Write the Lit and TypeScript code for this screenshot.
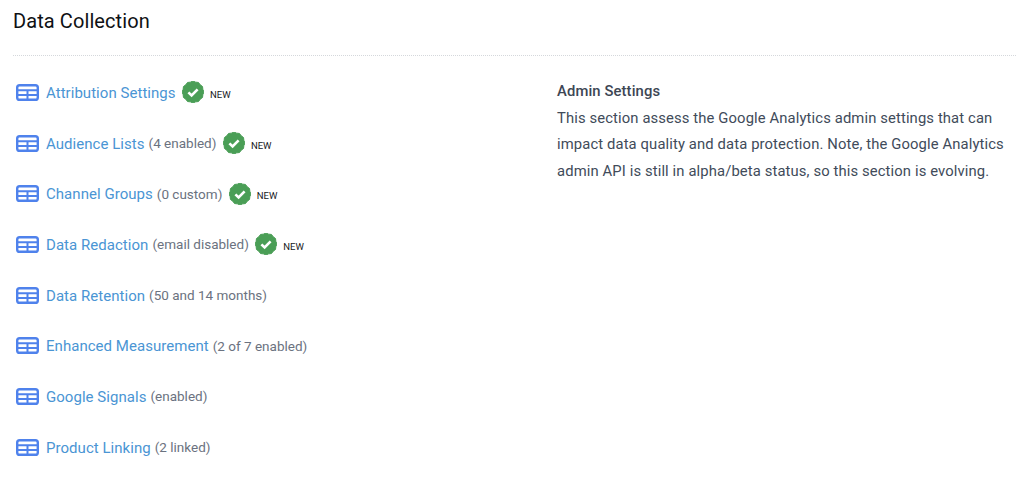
import { LitElement, html, css, svg } from "lit";
import { customElement } from "lit/decorators.js";

const items: [string, string, boolean][] = [
  ["Attribution Settings", "", true],
  ["Audience Lists", "(4 enabled)", true],
  ["Channel Groups", "(0 custom)", true],
  ["Data Redaction", "(email disabled)", true],
  ["Data Retention", "(50 and 14 months)", false],
  ["Enhanced Measurement", "(2 of 7 enabled)", false],
  ["Google Signals", "(enabled)", false],
  ["Product Linking", "(2 linked)", false],
];

function sealPath(): string {
  const pts: string[] = [];
  const n = 12;
  for (let i = 0; i < n * 2; i++) {
    const r = i % 2 ? 10.2 : 11;
    const a = (Math.PI * i) / n;
    pts.push(`${(11 + r * Math.sin(a)).toFixed(2)} ${(11 - r * Math.cos(a)).toFixed(2)}`);
  }
  return "M" + pts.join("L") + "Z";
}
const seal = sealPath();

@customElement("app-root")
export class AppRoot extends LitElement {
  static styles = css`
    :host { display: block; width: 1024px; height: 481px; background: #fff; font-family: Roboto, "Liberation Sans", sans-serif; overflow: hidden; }
    .head { margin: 0 8px 0 13px; height: 55px; border-bottom: 1px dotted #d5d8dc; }
    h1 { margin: 0; padding-top: 9px; font: 400 20px/24px Roboto, sans-serif; color: #0f1114; letter-spacing: 0.09px; }
    .main { display: flex; padding: 11px 0 0 16px; }
    .list { width: 541px; flex: none; display: flex; flex-direction: column; }
    .row { height: 50.7px; display: flex; align-items: center; white-space: nowrap; }
    .tbl { width: 23px; height: 17px; flex: none; margin-right: 7px; }
    .name { font-size: 15px; color: #4a95d4; letter-spacing: 0.04px; position: relative; top: 0.5px; }
    .note { font-size: 13.5px; color: #6b7280; margin-left: 4px; letter-spacing: 0; }
    .seal { width: 22px; height: 22px; flex: none; margin-left: 6.5px; }
    .new { font-size: 9.5px; font-weight: 400; color: #16181b; margin-left: 6px; position: relative; top: 2px; }
    .side { width: 455px; padding-top: 16px; color: #414b5a; font-size: 14.8px; line-height: 26.4px; letter-spacing: 0.12px; }
    .side b { display: block; font-weight: 500; line-height: 16px; padding-bottom: 6px; color: #3d4654; }
    .side p { margin: 0; }
  `;

  render() {
    return html`
      <div class="head"><h1>Data Collection</h1></div>
      <div class="main">
        <div class="list">
          ${items.map(([n, note, isNew]) => html`
            <div class="row">
              <svg class="tbl" viewBox="0 0 23 17" fill="none">
                <rect x="1.2" y="1.2" width="20.6" height="14.6" rx="2.4" stroke="#4f82ec" stroke-width="2.4"/>
                <path d="M1 6.2H22M1 11H22M11.5 6.2V16" stroke="#4f82ec" stroke-width="2"/>
              </svg>
              <span class="name">${n}</span>
              ${note ? html`<span class="note">${note}</span>` : ""}
              ${isNew ? html`
                <svg class="seal" viewBox="0 0 22 22">
                  ${svg`<path d="${seal}" fill="#4a9e56" stroke="#4a9e56" stroke-linejoin="round"/>
                  <path d="M6.4 11.3l3.2 3.2 6-6.2" fill="none" stroke="#fff" stroke-width="2.6"/>`}
                </svg>
                <span class="new">NEW</span>` : ""}
            </div>`)}
        </div>
        <div class="side">
          <b>Admin Settings</b>
          <p>This section assess the Google Analytics admin settings that can<br>impact data quality and data protection. Note, the Google Analytics<br>admin API is still in alpha/beta status, so this section is evolving.</p>
        </div>
      </div>
    `;
  }
}
